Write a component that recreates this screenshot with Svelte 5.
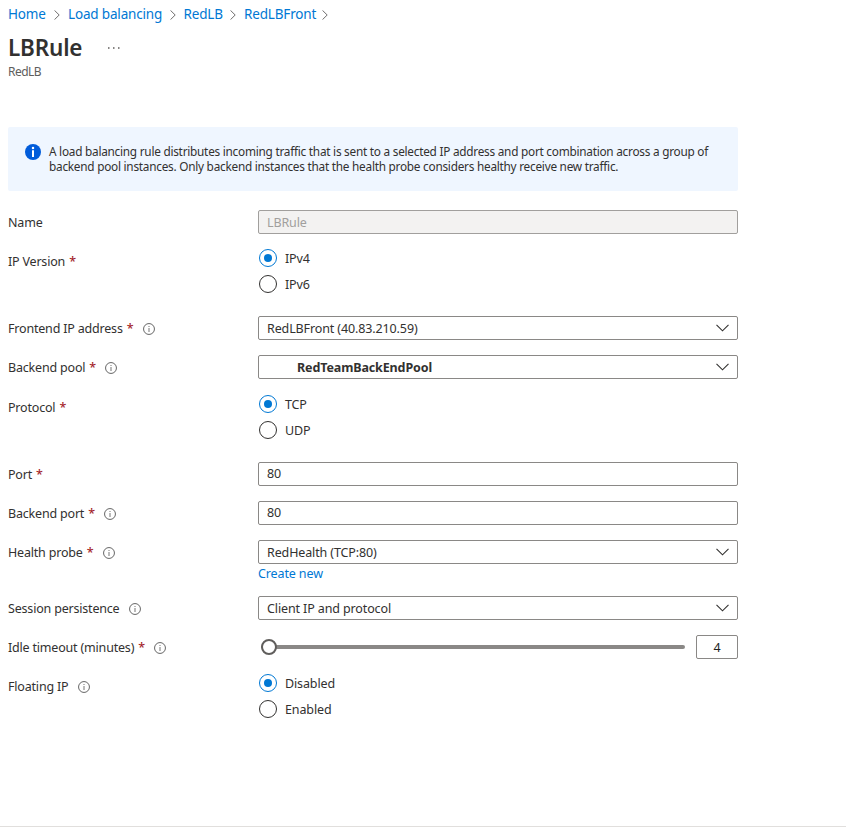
<script>
  const crumbs = [
    { text: 'Home', width: 38 },
    { text: 'Load balancing', width: 93.5 },
    { text: 'RedLB', width: 38.5 },
    { text: 'RedLBFront', width: 70 }
  ];

  const rows = [
    { label: 'Name', kind: 'text', value: 'LBRule', disabled: true, height: 24 },
    { label: 'IP Version', required: true, kind: 'radio', options: ['IPv4', 'IPv6'], height: 52 },
    { label: 'Frontend IP address', required: true, info: true, kind: 'select', value: 'RedLBFront (40.83.210.59)', height: 24 },
    { label: 'Backend pool', required: true, info: true, kind: 'select', value: 'RedTeamBackEndPool', strong: true, height: 25 },
    { label: 'Protocol', required: true, kind: 'radio', options: ['TCP', 'UDP'], height: 52 },
    { label: 'Port', required: true, kind: 'text', value: '80', height: 24 },
    { label: 'Backend port', required: true, info: true, kind: 'text', value: '80', height: 24 },
    { label: 'Health probe', required: true, info: true, kind: 'select', value: 'RedHealth (TCP:80)', link: 'Create new', height: 41 },
    { label: 'Session persistence', info: true, kind: 'select', value: 'Client IP and protocol', height: 24 },
    { label: 'Idle timeout (minutes)', required: true, info: true, kind: 'slider', value: '4', height: 24 },
    { label: 'Floating IP', info: true, kind: 'radio', options: ['Disabled', 'Enabled'], height: 52 }
  ];
</script>

<main>
  <nav>
    {#each crumbs as c}
      <a href="#top" style:width="{c.width}px">{c.text}</a>
      <svg class="sep" width="6" height="10" viewBox="0 0 6 10"><path d="M.5.4 5.2 5 .5 9.6" /></svg>
    {/each}
  </nav>

  <header>
    <h1>LBRule</h1>
    <svg class="more" width="12" height="2" viewBox="0 0 12 2"><path d="M0 .3h1.5v1.4H0zM5 .3h1.5v1.4H5zM10 .3h1.5v1.4H10z" /></svg>
  </header>
  <p class="sub">RedLB</p>

  <section class="banner">
    <svg width="16" height="16" viewBox="0 0 16 16">
      <circle cx="8" cy="8" r="8" fill="#015cda" />
      <circle cx="8" cy="4" r="1.25" fill="#fff" />
      <path d="M7 6.2h2V13H7z" fill="#fff" />
    </svg>
    <p>
      A load balancing rule distributes incoming traffic that is sent to a selected IP address and port combination across a group of<br />
      backend pool instances. Only backend instances that the health probe considers healthy receive new traffic.
    </p>
  </section>

  <form>
    {#each rows as row}
      <div class="row" style:height="{row.height}px">
        <div class="label">
          <span>{row.label}</span>
          {#if row.required}<b>*</b>{/if}
          {#if row.info}
            <svg class="info" width="12" height="12" viewBox="0 0 12 12">
              <circle cx="6" cy="6" r="5.45" fill="none" stroke="#666" />
              <path d="M5.5 3h1v1.1h-1zM5.5 5h1v4h-1z" fill="#777" />
            </svg>
          {/if}
        </div>
        <div class="control">
          {#if row.kind === 'radio'}
            {#each row.options as option, i}
              <div class="radio">
                <i class:on={i === 0}></i><span>{option}</span>
              </div>
            {/each}
          {:else if row.kind === 'slider'}
            <div class="slider">
              <div class="track"><i></i></div>
              <div class="box num"><span>{row.value}</span></div>
            </div>
          {:else}
            <div class="box" class:entry={row.kind === 'text' && !row.disabled} class:disabled={row.disabled} class:strong={row.strong}>
              <span>{row.value}</span>
              {#if row.kind === 'select'}
                <svg width="13" height="8" viewBox="0 0 13 8"><path d="M.5.8 6.5 6.8 12.5.8" /></svg>
              {/if}
            </div>
            {#if row.link}<a class="create" href="#new">{row.link}</a>{/if}
          {/if}
        </div>
      </div>
    {/each}
  </form>
  <footer></footer>
</main>

<style>
  :global(body) { background: #fff; }
  main {
    box-sizing: border-box;
    height: 835px;
    display: flex;
    flex-direction: column;
    overflow: hidden;
    font: 12.5px/18px "Noto Sans", "Open Sans", sans-serif;
    letter-spacing: -0.12px;
    color: #323130;
  }
  a { color: #0078d4; text-decoration: none; white-space: nowrap; }
  nav {
    display: flex;
    align-items: center;
    height: 18px;
    padding: 5px 8px 0;
    font-size: 13.5px;
    letter-spacing: -0.17px;
  }
  .sep { margin: 2px 8px 0; fill: none; stroke: #605e5c; stroke-width: 0.9; }
  header { display: flex; align-items: center; height: 32px; padding: 9px 8px 0; }
  h1 { margin: 0; width: 100px; font-size: 22.5px; line-height: 32px; font-weight: 600; letter-spacing: -0.2px; }
  .more { fill: #605e5c; }
  .sub { margin: 0 8px; height: 16px; font-size: 12px; line-height: 16px; letter-spacing: -0.55px; color: #605e5c; }
  .banner {
    box-sizing: border-box;
    display: flex;
    width: 730px;
    height: 64px;
    margin: 47px 0 0 8px;
    padding: 17px 0 0 17px;
    border-radius: 2px;
    background: #eff6ff;
  }
  .banner p { margin: 0 0 0 8px; font-size: 11.8px; line-height: 15px; letter-spacing: -0.245px; white-space: nowrap; }
  form { display: flex; flex-direction: column; gap: 15px; margin: 19px 0 0 8px; }
  .row { display: flex; width: 730px; }
  .label { display: flex; align-items: center; width: 250px; height: 25px; letter-spacing: -0.19px; white-space: nowrap; }
  .label b { margin-left: 4px; color: #a4262c; font-weight: 500; font-size: 12.5px; }
  .info { margin: 1px 0 0 9.5px; }
  .control { width: 480px; }
  .box {
    box-sizing: border-box;
    display: flex;
    align-items: center;
    justify-content: space-between;
    height: 24px;
    padding: 0 8px;
    border: 1px solid #8a8886;
    border-radius: 2px;
    background: #fff;
  }
  .box span { padding-top: 2px; }
  .entry span { padding-top: 0; }
  .box svg { fill: none; stroke: #323130; stroke-width: 1.1; }
  .disabled { background: #f3f2f1; color: #a19f9d; border-color: #a19f9d; }
  .strong { padding-left: 38px; font-weight: 700; }
  .radio { display: flex; align-items: center; height: 18px; margin-bottom: 8px; }
  .radio span { padding-top: 2px; }
  .radio i {
    box-sizing: border-box;
    display: grid;
    place-items: center;
    width: 18px;
    height: 18px;
    margin: 0 8px 0 1px;
    border: 1px solid #323130;
    border-radius: 50%;
  }
  .radio i.on { border-color: #0078d4; }
  .radio i.on::after { content: ""; width: 8px; height: 8px; border-radius: 50%; background: #0078d4; }
  .slider { display: flex; align-items: center; justify-content: space-between; }
  .track { display: flex; align-items: center; width: 424px; height: 4px; margin-left: 3px; border-radius: 2px; background: #8a8886; }
  .track i { box-sizing: border-box; width: 16px; height: 16px; border: 2px solid #605e5c; border-radius: 50%; background: #fff; }
  .num { width: 42px; justify-content: center; color: #201f1e; }
  .create { display: block; line-height: 20px; }
  footer { height: 1px; margin-top: auto; margin-bottom: 8px; background: #e1dfdd; flex: none; }
</style>
